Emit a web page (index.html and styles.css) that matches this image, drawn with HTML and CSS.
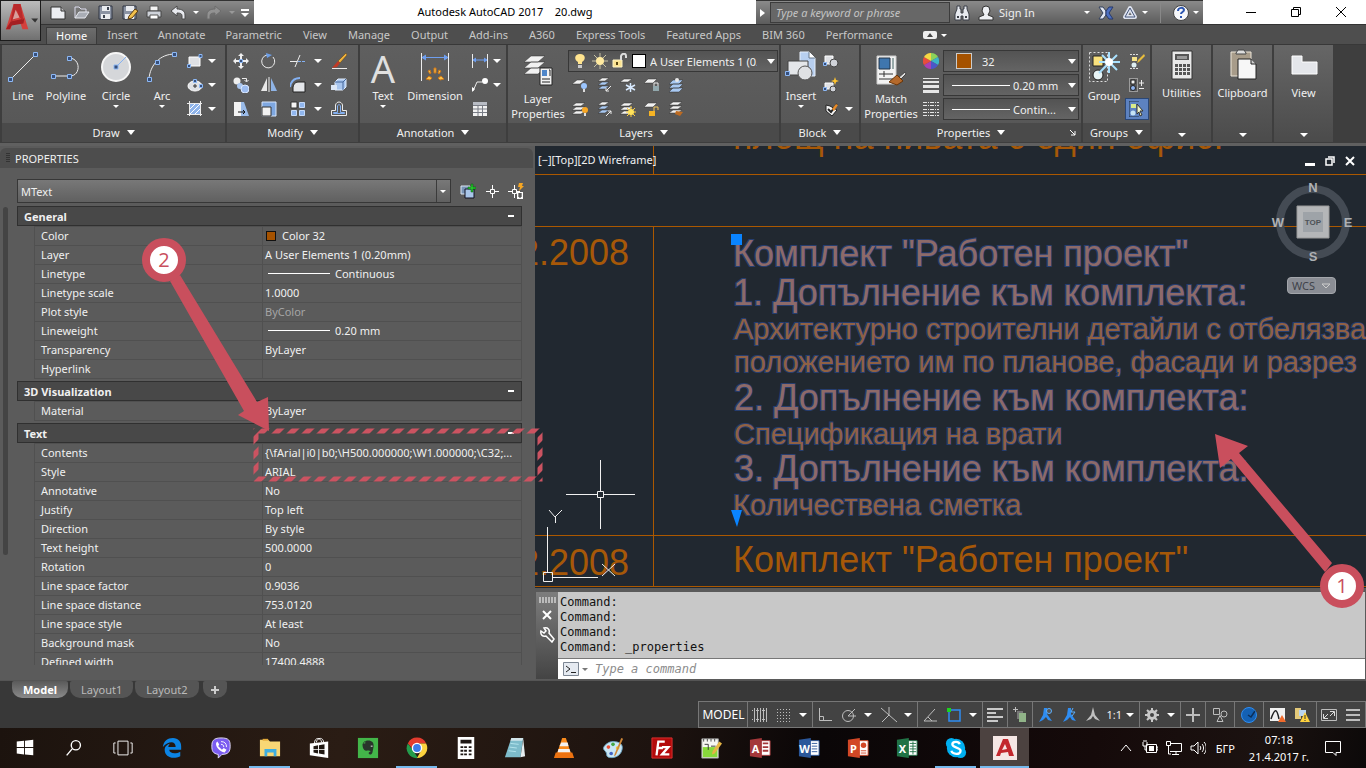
FILE: index.html
```html
<!DOCTYPE html>
<html lang="en">
<head>
    <meta charset="UTF-8">
    <meta name="viewport" content="width=device-width, initial-scale=1.0">
    <title>Autodesk AutoCAD 2017 - 20.dwg</title>
    <link rel="stylesheet" href="styles.css">
</head>
<body>
    <!-- Title bar -->
    <header class="titlebar">
        <div class="quick-access">
            <button class="ic" aria-label="New"><svg viewBox="0 0 16 16"><path d="M1 2h10l4 4v8H1z" fill="#eceef2" stroke="#333"/><path d="M11 2v4h4" fill="#bbb" stroke="#333"/></svg></button>
            <button class="ic" aria-label="Open"><svg viewBox="0 0 16 16"><path d="M1 13V2h4l2 2h5v3" fill="#777" stroke="#dde"/><path d="M1 13l4-6h10l-4 6z" fill="#a9adb5" stroke="#e6e8ee"/></svg></button>
            <button class="ic" aria-label="Save"><svg viewBox="0 0 16 16"><path d="M1 1h13v13H1z" fill="#8b93a3" stroke="#2f3542"/><path d="M4 1h8v5H4z" fill="#e9ebef"/><path d="M3 9h9v5H3z" fill="#e9ebef"/><path d="M9 2h2v3H9zM5 10h2v3H5z" fill="#3c4350"/></svg></button>
            <button class="ic" aria-label="Save As"><svg viewBox="0 0 16 16"><path d="M1 1h13v13H1z" fill="#8b93a3" stroke="#2f3542"/><path d="M4 1h8v5H4z" fill="#e9ebef"/><path d="M3 9h9v5H3z" fill="#e9ebef"/><path d="M7 11l6-7 3 2-6 7-4 1z" fill="#f2c14c" stroke="#5b3b10"/></svg></button>
            <button class="ic" aria-label="Plot"><svg viewBox="0 0 16 16"><path d="M4 1h8v5H4z" fill="#f4f4f4" stroke="#555"/><path d="M1 6h14v6H1z" fill="#cfd3da" stroke="#444"/><path d="M4 10h8v4H4z" fill="#fff" stroke="#555"/></svg></button>
            <button class="ic" aria-label="Undo"><svg viewBox="0 0 16 16"><path d="M1 6l6-5v3c5 0 8 2 8 6v4h-3v-3c0-2-1-3-5-3v3z" fill="#e8eaef" stroke="#4a4a4a"/></svg></button>
            <i class="caret caret-sm"></i>
            <button class="ic" aria-label="Redo"><svg viewBox="0 0 16 16"><path d="M15 6L9 1v3C4 4 1 6 1 10v4h3v-3c0-2 1-3 5-3v3z" fill="#929292" stroke="#6d6d6d"/></svg></button>
            <i class="caret caret-sm dim"></i>
            <button class="ic narrow" aria-label="Customize"><svg viewBox="0 0 10 10"><path d="M1 1h8v2H1zM1 5h8L5 9z" fill="#fff"/></svg></button>
        </div>
        <div class="doc-title">Autodesk AutoCAD 2017&nbsp;&nbsp;&nbsp; 20.dwg</div>
        <div class="infocenter">
            <i class="arrow-right"></i>
            <input class="search" type="text" placeholder="Type a keyword or phrase" aria-label="Search">
            <button class="ic" aria-label="Find"><svg viewBox="0 0 16 16"><path d="M3 1h3v3h1v4h2V4h1V1h3v3l2 5v6H9v-4H7v4H1V9l2-5z" fill="#e7eaf0" stroke="#3b3f48"/><path d="M3 12h2M11 12h2" stroke="#3b3f48" stroke-width="2"/></svg></button>
            <button class="signin"><svg class="s16" viewBox="0 0 16 16"><path d="M1 15v-3l5-2-2-4 1-4 3-1 3 1 1 4-2 4 5 2v3z" fill="#eef0f4" stroke="#333"/></svg>Sign In</button>
            <i class="caret caret-sm"></i>
            <button class="ic" aria-label="Exchange Apps"><svg viewBox="0 0 16 16"><path d="M1 2h4l3 4v4l-3 4H1l4-6z" fill="#e3e8f3" stroke="#32405e"/><path d="M15 2h-4L8 6v4l3 4h4l-4-6z" fill="#4d6fc0" stroke="#27396b"/></svg></button>
            <button class="ic" aria-label="Autodesk 360"><svg viewBox="0 0 16 16"><path d="M8 3L3 12h10z" fill="none" stroke="#dfe4f0" stroke-width="4" stroke-linejoin="round"/><path d="M8 3L3 12h10z" fill="none" stroke="#46567a"/></svg></button>
            <i class="caret caret-sm"></i>
            <span class="divider"></span>
            <button class="ic" aria-label="Help"><svg viewBox="0 0 16 16"><circle cx="8" cy="8" r="7.500" fill="#f6f7fa" stroke="#444"/><path d="M5 6c0-4 6-4 6-1 0 2-3 2-3 4" fill="none" stroke="#2c55b0" stroke-width="2"/><path d="M7 11h2v2H7z" fill="#2c55b0"/></svg></button>
            <i class="caret caret-sm"></i>
        </div>
        <div class="window-buttons">
            <button aria-label="Minimize"><svg class="s12" viewBox="0 0 12 12"><path d="M1 6.500h10" stroke="#000"/></svg></button>
            <button aria-label="Restore"><svg class="s12" viewBox="0 0 12 12"><path d="M1.500 3.500h7v7h-7zM3.500 3V1.500h7v7H9" fill="none" stroke="#000"/></svg></button>
            <button aria-label="Close"><svg class="s12" viewBox="0 0 12 12"><path d="M1 1l10 10M11 1L1 11" stroke="#000"/></svg></button>
        </div>
    </header>
    <button class="app-button" aria-label="Application menu">
        <svg viewBox="0 0 40 40"><path d="M5 29L13 3h7l8 26h-6l-2-6-9 1-1 5z" fill="#d4403c"/><path d="M5 29l5-8 14-3-1 5-12 2-2 4z" fill="#a51f22"/><path d="M13 3l-3 18 6-3V9l3 8 4 3-3-17z" fill="#b92a2b"/><path d="M15 9l-3 10 7-2z" fill="#d8a09c"/><path d="M31 18h7l-3 4z" fill="#333"/></svg>
    </button>

    <!-- Ribbon tabs -->
    <nav class="tabs">
        <a href="#" class="active">Home</a>
        <a href="#">Insert</a>
        <a href="#">Annotate</a>
        <a href="#">Parametric</a>
        <a href="#">View</a>
        <a href="#">Manage</a>
        <a href="#">Output</a>
        <a href="#">Add-ins</a>
        <a href="#">A360</a>
        <a href="#">Express Tools</a>
        <a href="#">Featured Apps</a>
        <a href="#">BIM 360</a>
        <a href="#">Performance</a>
        <button class="ribbon-min" aria-label="Minimize ribbon"><svg viewBox="0 0 24 8"><rect width="14" height="8" rx="2" fill="#eee"/><path d="M4 6h6L7 2z" fill="#444"/><path d="M18 3h6l-3 3z" fill="#fff"/></svg></button>
    </nav>

    <!-- Ribbon -->
    <section class="ribbon">
        <div class="panel draw">
            <div class="panel-body">
                <button class="big"><svg viewBox="0 0 32 32"><path class="w" d="M3 29L29 3"/><path class="node" d="M1.500 26.500h4v4h-4zM26.500 1.500h4v4h-4z"/></svg>Line</button>
                <button class="big"><svg viewBox="0 0 32 32"><path class="w" d="M3 25h17c11 0 11-18-1-18" /><path class="node" d="M1.500 23.500h4v4h-4zM17.500 23.500h4v4h-4zM17.500 5.500h4v4h-4z"/></svg>Polyline</button>
                <button class="big"><svg viewBox="0 0 32 32"><circle cx="16" cy="16" r="14" fill="#d5d7da" stroke="#f6f6f6" stroke-width="2"/><path class="b" d="M16 16L26 6"/><path class="node" d="M14 14h4v4h-4z"/></svg>Circle<i class="caret caret-sm"></i></button>
                <button class="big"><svg viewBox="0 0 32 32"><path class="w" d="M3 28C4 14 14 3 29 3"/><path class="node" d="M1.500 26.500h4v4h-4zM9.500 9.500h4v4h-4zM26.500 1.500h4v4h-4z"/></svg>Arc<i class="caret caret-sm"></i></button>
                <div class="tools with-caret">
                    <button class="ic" aria-label="Rectangle"><svg viewBox="0 0 16 16"><path d="M2 4h11v9H2z" fill="#dfe1e5" stroke="#fff"/><path class="node" d="M.5 11.500h3v3h-3zM12 1.500h3v3h-3z"/></svg></button><i class="caret"></i>
                    <button class="ic" aria-label="Ellipse"><svg viewBox="0 0 16 16"><ellipse cx="8" cy="9" rx="7" ry="5" fill="#dfe1e5" stroke="#fff"/><path d="M6 9h4M8 7v4" stroke="#333"/><path class="node" d="M6.500 2.500h3v3h-3zM12.500 7.500h3v3h-3z"/></svg></button><i class="caret"></i>
                    <button class="ic" aria-label="Hatch"><svg viewBox="0 0 16 16"><path d="M3 3h10v10H3z" fill="#8fb4ea"/><path d="M3 8l5-5M3 13L13 3M8 13l5-5" stroke="#fff"/><path class="w" d="M0 2.500h15M2.500 0v15"/><path class="w" d="M0 13.500h15M13.500 0v15"/></svg></button><i class="caret"></i>
                </div>
            </div>
            <button class="panel-title">Draw<i class="caret caret-lg"></i></button>
        </div>

        <div class="panel modify">
            <div class="panel-body">
                <div class="tools modify-grid">
                    <button class="ic" aria-label="Move"><svg viewBox="0 0 16 16"><path d="M8 0l3 3H9v3H7V3H5zM8 16l3-3H9v-3H7v3H5zM0 8l3-3v2h3v2H3v2zM16 8l-3-3v2h-3v2h3v2z" fill="#f0f0f0"/><path class="node" d="M6.500 6.500h3v3h-3z"/></svg></button>
                    <button class="ic" aria-label="Rotate"><svg viewBox="0 0 16 16"><path class="w" d="M12 4a6.500 6.500 0 1 1-6-2"/><path d="M5 0l6 2-5 3z" fill="#6d9fe8"/></svg></button>
                    <button class="ic" aria-label="Trim"><svg viewBox="0 0 16 16"><path class="b" d="M8 8.500h8" stroke-dasharray="3 1"/><path class="w" d="M5 14L10 2M0 8.500h7"/></svg></button><i class="caret"></i>
                    <button class="ic" aria-label="Erase"><svg viewBox="0 0 16 16"><path d="M15 0l1 2-7 8-2-2z" fill="#f0b23c" stroke="#533a12" stroke-width=".5"/><path d="M7 8l2 2-3 4-5 1z" fill="#c33a25"/><path class="w" d="M1 15.500h15"/></svg></button>
                    <button class="ic" aria-label="Copy"><svg viewBox="0 0 16 16"><circle cx="4" cy="4" r="3.500" fill="#eee"/><circle cx="7" cy="9" r="3" fill="#a9c5ee"/><circle cx="12" cy="12" r="4" fill="#9cbcf0" stroke="#dce9ff"/><path class="w" d="M9 1.500h4.500v3M11.500 3l2 2 2-2"/></svg></button>
                    <button class="ic" aria-label="Mirror"><svg viewBox="0 0 16 16"><path d="M6 1v13H0z" fill="#e8e8e8"/><path d="M10 1v13h6z" fill="#8fb4e6"/><path class="w" d="M8 0v15"/></svg></button>
                    <button class="ic" aria-label="Fillet"><svg viewBox="0 0 16 16"><path d="M3 15V10c1-4 3-5 6-5h6v10z" fill="#e4e6ea" stroke="#222"/><path class="b" d="M0 10C1 4 4 1 10 1" stroke-width="2"/></svg></button><i class="caret"></i>
                    <button class="ic" aria-label="Explode"><svg viewBox="0 0 16 16"><path d="M4 5l3-3h8v8l-3 3H4z" fill="#a8c5ed" stroke="#e1ecfb"/><path d="M4 5h8v8M12 5l3-3" fill="none" stroke="#44679b"/><path d="M0 8h6v5H0z" fill="#dce7f6"/></svg></button>
                    <button class="ic" aria-label="Stretch"><svg viewBox="0 0 16 16"><path d="M1 1h7v14H1z" fill="#f3f3f3"/><path d="M8 1h3l5 14H8z" fill="#9abbe8"/><path d="M5 11h7M10 9l2 2-2 2" fill="none" stroke="#111"/></svg></button>
                    <button class="ic" aria-label="Scale"><svg viewBox="0 0 16 16"><path d="M1 1h14v14H1z" fill="#7ea7e0" stroke="#d8e6fb"/><path d="M1 6h9v9H1z" fill="#f1f1f1" stroke="#333"/></svg></button>
                    <button class="ic" aria-label="Array"><svg viewBox="0 0 16 16"><path d="M1 1h6v6H1z" fill="#f4f4f4" stroke="#333"/><path d="M9.500 1.500h5v5h-5zM9.500 9.500h5v5h-5zM1.500 9.500h5v5h-5z" fill="#90b6ee" stroke="#c5dafa"/></svg></button><i class="caret"></i>
                    <button class="ic" aria-label="Offset"><svg viewBox="0 0 16 16"><path class="w" d="M.5 14.500V9.500h4V4c1-4 6-4 7 0v5.500h4v5z"/><path class="b" d="M2.500 12.500v-1h4V5c1-2 2-2 3 0v6.500h4v1z"/></svg></button>
                </div>
            </div>
            <button class="panel-title">Modify<i class="caret caret-lg"></i></button>
        </div>

        <div class="panel annotation">
            <div class="panel-body">
                <button class="big"><span class="letter">A</span>Text<i class="caret caret-sm"></i></button>
                <button class="big"><svg viewBox="0 0 32 32"><path class="w" d="M2.500 2v28M29.500 2v28"/><path d="M4 6.500h24M7 4L3 6.500 7 9M25 4l4 2.500L25 9" fill="#6f9ff0" stroke="#6f9ff0"/><path d="M15 17h2v5h-2zM9 20l2-1 1 3-1 1zM22 20l-2-1-1 3 1 1zM7 28l3-3 3 2-2 2zM25 28l-3-3-3 2 2 2z" fill="#f9c24a" stroke="#c9751a"/></svg>Dimension</button>
                <div class="tools with-caret">
                    <button class="ic" aria-label="Linear"><svg viewBox="0 0 16 16"><path class="w" d="M.5 1v14M15.500 1v14"/><path d="M2 7h12M4 5L1 7l3 2M12 5l3 2-3 2" fill="#6f9ff0" stroke="#6f9ff0"/></svg></button><i class="caret"></i>
                    <button class="ic" aria-label="Leader"><svg viewBox="0 0 16 16"><path class="w" d="M1 14l4-9h5"/><path d="M0 15v-5l3 2z" fill="#fff"/><circle cx="13" cy="4" r="3" fill="#fff"/></svg></button><i class="caret"></i>
                    <button class="ic" aria-label="Table"><svg viewBox="0 0 16 16"><path d="M1 1h14v14H1z" fill="#f2f2f2"/><path d="M1 1h14v3H1z" fill="#b8bcc4"/><path d="M1 4.500h14M1 8h14M1 11.500h14M6 4v11M10.500 4v11" stroke="#787c85"/></svg></button>
                </div>
            </div>
            <button class="panel-title">Annotation<i class="caret caret-lg"></i></button>
        </div>

        <div class="panel layers">
            <div class="panel-body">
                <button class="big wide"><svg viewBox="0 0 32 32"><path class="sheet" d="M2 8l7-6h14l-7 6zM2 14l7-6h14l-7 6zM2 20l7-6h14l-7 6z"/><path d="M18 14h12v17H18z" fill="#f2f2f2" stroke="#222"/><path d="M20 16h5v6h-5z" fill="#4f86c9"/><path d="M27 16h1v6M20 25h8M20 28h8" stroke="#222" fill="none"/></svg>Layer<br>Properties</button>
                <div class="layer-tools">
                    <div class="combo layer-combo">
                        <span class="combo-icons">
                            <svg class="s16" viewBox="0 0 16 16"><path d="M8 1c6 0 6 6 2 8v2H6V9C2 7 2 1 8 1z" fill="#ffe48f"/><path d="M6 12h4v3H6z" fill="#c9c9c9"/></svg>
                            <svg class="s16" viewBox="0 0 16 16"><path d="M8 0v16M0 8h16M2 2l12 12M14 2L2 14" stroke="#c7c2a4"/><circle cx="8" cy="8" r="4" fill="#ffeaa0"/></svg>
                            <svg class="s16" viewBox="0 0 16 16"><path d="M1 7h9v7H1z" fill="#fbe391" stroke="#fff4c4"/><path d="M9 7V3c1-3 5-3 5 0v2" fill="none" stroke="#ddd" stroke-width="2"/><path d="M5 9v3" stroke="#554312" stroke-width="2"/></svg>
                            <span class="swatch white"></span>
                        </span>
                        <select aria-label="Layer"><option>A User Elements 1 (0.20mm)</option></select>
                    </div>
                    <div class="tools layer-grid">
                        <button class="ic" aria-label="Off"><svg viewBox="0 0 16 16"><path class="sheet" d="M0 7l5-4h8L8 7z"/><circle cx="12" cy="9" r="3" fill="#9cc6ff"/><path d="M11 12h2v3h-2z" fill="#ddd"/></svg></button>
                        <button class="ic" aria-label="Isolate"><svg viewBox="0 0 16 16"><path class="sheet" d="M2 4l4-3h7L9 4z"/><path class="sheet blue" d="M2 8l4-3h7L9 8zM2 12l4-3h7l-4 3z"/><path class="w" d="M15 9l-5 5m0-3v3h3"/></svg></button>
                        <button class="ic" aria-label="Freeze"><svg viewBox="0 0 16 16"><path class="sheet" d="M0 5l4-3h8L8 5z"/><path d="M10.500 6v9M6 8l9 5M15 8l-9 5" stroke="#d8eaff" stroke-width="1.500"/></svg></button>
                        <button class="ic" aria-label="Lock"><svg viewBox="0 0 16 16"><path class="sheet" d="M0 6l4-4h9L9 6z"/><path d="M9 9h6v5H9z" fill="#92a8ad"/><path class="w" d="M10 9V6h4v3"/></svg></button>
                        <button class="ic" aria-label="Make current"><svg viewBox="0 0 16 16"><path class="sheet blue" d="M1 7l4-4h10l-4 4zM1 11l4-4h10l-4 4zM1 15l4-4h10l-4 4z"/><circle cx="9" cy="3" r="2" fill="#e8e8e8"/></svg></button>
                        <button class="ic" aria-label="Turn all on"><svg viewBox="0 0 16 16"><path class="sheet" d="M0 5l4-3h9L9 5zM0 9l4-3h9L9 9zM0 13l4-3h9l-4 3z"/><circle cx="13" cy="9" r="3" fill="#f9a825"/><path d="M12 12h2v3h-2z" fill="#ddd"/></svg></button>
                        <button class="ic" aria-label="Unisolate"><svg viewBox="0 0 16 16"><path class="sheet" d="M2 4l4-3h7L9 4z"/><path class="sheet blue" d="M2 8l4-3h7L9 8zM2 12l4-3h7l-4 3z"/><path class="w" d="M10 15l5-5m-3 0h3v3"/></svg></button>
                        <button class="ic" aria-label="Thaw"><svg viewBox="0 0 16 16"><path class="sheet" d="M0 5l4-3h9L9 5zM0 9l4-3h9L9 9zM0 13l4-3h9l-4 3z"/><path d="M11 5v11M6 11h10M7 7l8 8M15 7l-8 8" stroke="#ffcf3d"/><circle cx="11" cy="11" r="3" fill="#ffe25a"/></svg></button>
                        <button class="ic" aria-label="Unlock"><svg viewBox="0 0 16 16"><path class="sheet" d="M0 6l4-4h9L9 6z"/><path d="M5 10h6v5H5z" fill="#f5b324"/><path d="M10 10V6h4v3" fill="none" stroke="#f5c95e"/></svg></button>
                        <button class="ic" aria-label="Match layer"><svg viewBox="0 0 16 16"><path class="sheet" d="M1 4l4-3h9l-4 3zM1 8l4-3h9l-4 3zM1 12l4-3h9l-4 3z"/><path d="M8 10l7 1-3 4-5-2z" fill="#bd6b22"/></svg></button>
                    </div>
                </div>
            </div>
            <button class="panel-title">Layers<i class="caret caret-lg"></i></button>
        </div>

        <div class="panel block">
            <div class="panel-body">
                <button class="big"><svg viewBox="0 0 32 32"><path d="M15 1h9l6 6v18H15z" fill="#b7cff0" stroke="#e6effb"/><path d="M24 1v6h6" fill="#fff" stroke="#678"/><path d="M3 10h20v14H3z" fill="#e4e6e9" stroke="#444"/><circle cx="20" cy="22" r="7" fill="#dfe1e4" stroke="#555"/><path class="node" d="M.5 20.500h4v4h-4z"/></svg>Insert<i class="caret caret-sm"></i></button>
                <div class="tools with-caret tight">
                    <button class="ic" aria-label="Create block"><svg viewBox="0 0 16 16"><path d="M2 3h8v8H2z" fill="#dfe1e5" stroke="#fff"/><circle cx="11" cy="10" r="4" fill="#cfd2d8" stroke="#444"/><path class="node" d="M.5 9.500h3v3h-3z"/></svg></button><i></i>
                    <button class="ic" aria-label="Edit block"><svg viewBox="0 0 16 16"><path d="M2 6h8v6H2z" fill="#dfe1e5" stroke="#fff"/><circle cx="10" cy="12" r="3" fill="#cfd2d8" stroke="#444"/><path d="M12 0l1 3 3 1-3 1-1 3-1-3-3-1 3-1z" fill="#ffc42e"/><path class="node" d="M.5 10.500h3v3h-3z"/></svg></button><i></i>
                    <button class="ic" aria-label="Edit attributes"><svg viewBox="0 0 16 16"><path d="M3 4l4 1 7 4-5 6-6-5z" fill="#f2f2f2" stroke="#222"/><path d="M5 8l3 3 6-8" fill="none" stroke="#222" stroke-width="2"/><path d="M9 8l4-5 2 1-4 6z" fill="#e98b28"/></svg></button><i class="caret"></i>
                </div>
            </div>
            <button class="panel-title">Block<i class="caret caret-lg"></i></button>
        </div>

        <div class="panel props">
            <div class="panel-body">
                <button class="big wide"><svg viewBox="0 0 32 32"><path d="M2 2h19v28H2z" fill="#f3f3f3" stroke="#ccc"/><path d="M4 4h11v11H4z" fill="#3f76ae" stroke="#234"/><path d="M18 4v11" stroke="#9aa" stroke-width="2"/><path d="M4 20h14M4 25h14M9 17v6" stroke="#333"/><path d="M30 18l1 2-6 6-2-2z" fill="#ddd" stroke="#444"/><path d="M22 21l6 6-6 4-8-3z" fill="#b4692b" stroke="#693508"/></svg>Match<br>Properties</button>
                <div class="prop-rows">
                    <svg class="s16" viewBox="0 0 16 16"><path d="M8 8V0a8 8 0 0 1 7 4z" fill="#8bd35a"/><path d="M8 8l7-4a8 8 0 0 1 0 8z" fill="#3db4c9"/><path d="M8 8l7 4a8 8 0 0 1-7 4z" fill="#4a58c8"/><path d="M8 8v8a8 8 0 0 1-7-4z" fill="#a940b4"/><path d="M8 8l-7 4a8 8 0 0 1 0-8z" fill="#e84c3d"/><path d="M8 8L1 4a8 8 0 0 1 7-4z" fill="#f6d743"/></svg>
                    <div class="combo color-combo"><span class="swatch orange"></span><select aria-label="Object color"><option>32</option></select></div>
                    <svg class="s16" viewBox="0 0 16 16"><path d="M0 1h16v1H0zM0 4h16v2H0zM0 8h16v3H0zM0 13h16v3H0z" fill="#e6e6e6"/></svg>
                    <div class="combo line-combo"><span class="sample"></span><select aria-label="Lineweight"><option>0.20 mm</option></select></div>
                    <svg class="s16" viewBox="0 0 16 16"><path d="M0 1.500h16M0 4.500h16M0 8.500h16M0 11.500h16M0 14.500h16" stroke="#e6e6e6" stroke-dasharray="4 1 1 1"/></svg>
                    <div class="combo line-combo"><span class="sample"></span><select aria-label="Linetype"><option>Contin...</option></select></div>
                </div>
            </div>
            <button class="panel-title">Properties<i class="caret caret-lg"></i><svg class="launcher" viewBox="0 0 8 8"><path d="M1 1l5 5M6 2v4H2" fill="none" stroke="#fff"/></svg></button>
        </div>

        <div class="panel groups">
            <div class="panel-body">
                <button class="big"><svg viewBox="0 0 32 32"><path d="M1.500 1.500h18v29h-18z" fill="none" stroke="#ddd" stroke-dasharray="2 2"/><path d="M5 5h10v10H5z" fill="#f9e17e" stroke="#222"/><circle cx="10" cy="24" r="5" fill="#e8f4f6" stroke="#222"/><path d="M21 1v21M11 11h21M14 4l15 15M29 4L11 22" stroke="#a9e1ff" stroke-width="2"/><circle cx="21" cy="11" r="4" fill="#fff"/></svg>Group</button>
                <div class="tools group-tools">
                    <button class="ic" aria-label="Ungroup"><svg viewBox="0 0 16 16"><path d="M1 1.500h9M1 15.500h9" stroke="#ddd" stroke-dasharray="2 1"/><path d="M3 4h5v4H3z" fill="#f6e38a"/><circle cx="5" cy="12" r="2.500" fill="#dfeff2"/><path d="M15 1l1 2-6 6-2 1 1-3z" fill="#e9bd3c"/></svg></button>
                    <button class="ic" aria-label="Group edit"><svg viewBox="0 0 16 16"><path d="M.5 1.500h8v13h-8z" fill="none" stroke="#ddd" stroke-dasharray="1 1"/><path d="M2 3h4v4H2z" fill="#f1f1f1" stroke="#222"/><circle cx="4" cy="11" r="2.500" fill="#8fb3ef" stroke="#222"/><path class="w" d="M10 6h5M12.500 3v6M10 11.500h5"/></svg></button>
                    <button class="ic on" aria-label="Group selection"><svg viewBox="0 0 16 16"><path d="M.5.5h9M.5 15.500h9M.5.5v15" stroke="#234" stroke-dasharray="1 1"/><path d="M2 3h5v4H2z" fill="#d9eb8a"/><circle cx="4" cy="12" r="2.500" fill="#c5e3f5"/><path d="M8 3l6 7H11l2 4-2 1-1-4-2 2z" fill="#eef3c9" stroke="#333"/></svg></button>
                </div>
            </div>
            <button class="panel-title">Groups<i class="caret caret-lg"></i></button>
        </div>

        <button class="folded"><svg viewBox="0 0 32 32"><path d="M6 2h20v28H6z" fill="#e8e8e8" stroke="#333"/><path d="M9 5h14v6H9z" fill="#555"/><path d="M11 7h10v3H11z" fill="#999"/><path d="M9 15h3v3H9zM13 15h3v3h-3zM17 15h3v3h-3zM21 15h3v3h-3zM9 19h3v3H9zM13 19h3v3h-3zM17 19h3v3h-3zM21 19h3v3h-3zM9 23h3v3H9zM13 23h3v3h-3zM17 23h3v3h-3zM21 23h3v3h-3z" fill="#555"/></svg>Utilities<i class="caret"></i></button>
        <button class="folded"><svg viewBox="0 0 32 32"><path d="M4 3h20v24H4z" fill="#a89c8a" stroke="#ece5d8"/><path d="M9 4l2-3h6l2 3v1H9z" fill="#ddd" stroke="#444"/><path d="M11 10h13l5 5v15H11z" fill="#f7f7f7" stroke="#222"/><path d="M24 10v5h5" fill="#ccc" stroke="#222"/></svg>Clipboard<i class="caret"></i></button>
        <button class="folded"><svg viewBox="0 0 32 32"><path d="M4 7h10v6h15v12H4z" fill="#e4e6ea" stroke="#fff"/></svg>View<i class="caret"></i></button>
    </section>

    <main class="workspace">
        <!-- Properties palette -->
        <aside class="palette">
            <div class="palette-title"><span class="grip"></span>PROPERTIES</div>
            <div class="palette-body">
                <div class="object-row">
                    <div class="combo object-combo"><select aria-label="Object type"><option>MText</option></select></div>
                    <button class="ic" aria-label="Toggle PICKADD"><svg viewBox="0 0 16 16"><path d="M1 3h9v8H1z" fill="#7893b5" stroke="#dbe7f5"/><path d="M5 6h9v9H5z" fill="#a9c6ea" stroke="#112"/><path d="M11 1h2v3h3v2h-3v3h-2V6H8V4h3z" fill="#25c12c" stroke="#075a0c" stroke-width=".5"/></svg></button>
                    <button class="ic" aria-label="Select objects"><svg viewBox="0 0 16 16"><path d="M8.500 2v4M8.500 11v4M2 8.500h4M11 8.500h4M6.500 6.500h4v4h-4z" fill="none" stroke="#fff"/></svg></button>
                    <button class="ic" aria-label="Quick select"><svg viewBox="0 0 16 16"><path d="M6.500 2v4M6.500 11v4M0 8.500h4M9 8.500h3M4.500 6.500h4v4h-4z" fill="none" stroke="#fff"/><path d="M11 0h4l-1 3h2l-5 5 1-4h-2z" fill="#f5a623"/><path d="M9 9h6v7H9z" fill="#fff"/><path d="M10 11h4M10 13h4M12 10v5" stroke="#222"/></svg></button>
                </div>
                <div class="prop-scroll">
                    <h2 class="section">General<button aria-label="Collapse General"></button></h2>
                    <table class="proptable">
                        <tr><th>Color</th><td><span class="color-box"></span>Color 32</td></tr>
                        <tr><th>Layer</th><td>A User Elements 1 (0.20mm)</td></tr>
                        <tr><th>Linetype</th><td><span class="line-sample"></span>Continuous</td></tr>
                        <tr><th>Linetype scale</th><td>1.0000</td></tr>
                        <tr><th>Plot style</th><td class="muted">ByColor</td></tr>
                        <tr><th>Lineweight</th><td><span class="line-sample"></span>0.20 mm</td></tr>
                        <tr><th>Transparency</th><td>ByLayer</td></tr>
                        <tr><th>Hyperlink</th><td></td></tr>
                    </table>
                    <h2 class="section">3D Visualization<button aria-label="Collapse 3D Visualization"></button></h2>
                    <table class="proptable">
                        <tr><th>Material</th><td>ByLayer</td></tr>
                    </table>
                    <h2 class="section">Text<button aria-label="Collapse Text"></button></h2>
                    <table class="proptable">
                        <tr><th>Contents</th><td>{\fArial|i0|b0;\H500.000000;\W1.000000;\C32;...</td></tr>
                        <tr><th>Style</th><td>ARIAL</td></tr>
                        <tr><th>Annotative</th><td>No</td></tr>
                        <tr><th>Justify</th><td>Top left</td></tr>
                        <tr><th>Direction</th><td>By style</td></tr>
                        <tr><th>Text height</th><td>500.0000</td></tr>
                        <tr><th>Rotation</th><td>0</td></tr>
                        <tr><th>Line space factor</th><td>0.9036</td></tr>
                        <tr><th>Line space distance</th><td>753.0120</td></tr>
                        <tr><th>Line space style</th><td>At least</td></tr>
                        <tr><th>Background mask</th><td>No</td></tr>
                        <tr><th>Defined width</th><td>17400.4888</td></tr>
                    </table>
                </div>
            </div>
        </aside>

        <div class="editor">
            <!-- Model space -->
            <div class="canvas">
                <svg class="drawing">
                    <g class="frame">
                        <path d="M118.500 0v28M118.500 80v361"/>
                        <line x1="0" y1="28.500" x2="100%" y2="28.500"/>
                        <line x1="0" y1="80.500" x2="100%" y2="80.500"/>
                        <line x1="0" y1="389.500" x2="100%" y2="389.500"/>
                        <line x1="0" y1="440.500" x2="100%" y2="440.500"/>
                    </g>
                    <g class="note">
                        <text x="198" y="3">площ на нивата с един офис.</text>
                        <text x="94" y="119" text-anchor="end">12.2008</text>
                        <text x="94" y="429" text-anchor="end">12.2008</text>
                        <text x="198" y="426">Комплект "Работен проект"</text>
                    </g>
                    <g class="note picked">
                        <text x="198" y="120">Комплект "Работен проект"</text>
                        <text x="198" y="159">1. Допълнение към комплекта:</text>
                        <text x="199" y="193" class="small">Архитектурно строителни детайли с отбелязва</text>
                        <text x="199" y="226" class="small">положението им по планове, фасади и разрез</text>
                        <text x="199" y="264">2. Допълнение към комплекта:</text>
                        <text x="199" y="298" class="small">Спецификация на врати</text>
                        <text x="199" y="335">3. Допълнение към комплекта:</text>
                        <text x="198" y="369" class="small">Количествена сметка</text>
                    </g>
                    <path d="M196 88h11v11h-11zM196 364h11l-5 17z" fill="#0a84ff"/>
                    <path d="M31 348.500h31M69 348.500h31M65.500 314v31M65.500 352v31M62.500 345.500h6v6h-6z" class="cursor"/>
                    <path d="M12.500 381v45M17 431.500h46M8.500 426.500h9v9h-9zM14 364l6 7 7-7M20.500 371v6M67 418l13 12M80 418l-13 12" class="cursor"/>
                </svg>
                <div class="viewport-label">[−][Top][2D Wireframe]</div>
                <div class="doc-buttons">
                    <button aria-label="Minimize drawing"><svg class="s12" viewBox="0 0 12 12"><path d="M1 8h10v3H1z" fill="#fff"/></svg></button>
                    <button aria-label="Restore drawing"><svg class="s12" viewBox="0 0 12 12"><path d="M2 4h6v6H2zM4 2h6v6" fill="none" stroke="#fff" stroke-width="1.500"/></svg></button>
                    <button aria-label="Close drawing"><svg class="s12" viewBox="0 0 12 12"><path d="M2 2l8 8M10 2l-8 8" stroke="#fff" stroke-width="2"/></svg></button>
                </div>
                <div class="viewcube">
                    <svg viewBox="0 0 84 84"><circle cx="42" cy="42" r="33" fill="none" stroke="#444b54" stroke-width="8"/><path d="M26 26h32v32H26z" fill="#b4b6b8" stroke="#999"/><path d="M32 32h20v20H32z" fill="#9ea3a8"/></svg>
                    <span class="north">N</span><span class="east">E</span><span class="south">S</span><span class="west">W</span><span class="top">TOP</span>
                </div>
                <button class="wcs">WCS<svg viewBox="0 0 10 6"><path d="M1 1h8L5 5z" fill="none" stroke="#ccc"/></svg></button>
            </div>

            <!-- Command line -->
            <div class="command">
                <div class="command-side">
                    <span class="dots"></span>
                    <svg class="s12" viewBox="0 0 12 12"><path d="M2 2l8 8M10 2l-8 8" stroke="#fff" stroke-width="2"/></svg>
                    <svg class="s16" viewBox="0 0 16 16"><path d="M2 4l3 2 2-2-2-3c4-1 6 2 5 5l5 6-2 3-6-6C4 10 1 8 2 4z" fill="none" stroke="#fff" stroke-width="1.500"/></svg>
                </div>
                <div class="command-main">
                    <div class="history">
                        <div>Command:</div>
                        <div>Command:</div>
                        <div>Command:</div>
                        <div>Command: _properties</div>
                    </div>
                    <div class="prompt">
                        <svg class="s16" viewBox="0 0 16 16"><path d="M.5 1.500h15v13H.5z" fill="#e5eaf1" stroke="#7d8794"/><path d="M3 5l4 3-4 3M8 11.500h5" fill="none" stroke="#222"/></svg>
                        <i class="caret caret-sm dark"></i>
                        <input type="text" placeholder="Type a command" aria-label="Command">
                    </div>
                </div>
            </div>
        </div>
    </main>

    <!-- Layout tabs and status bar -->
    <footer class="bottom">
        <div class="layouts">
            <button class="active">Model</button>
            <button>Layout1</button>
            <button>Layout2</button>
            <button class="add" aria-label="New layout"><svg viewBox="0 0 10 10"><path d="M5 1v8M1 5h8" stroke="#ccc" stroke-width="2"/></svg></button>
        </div>
        <div class="status">
            <div class="cell model"><button>MODEL</button></div>
            <div class="cell">
                <button class="ic" aria-label="Grid"><svg viewBox="0 0 16 16"><path class="g" d="M2.500 1v14M5.500 1v14M8.500 1v14M11.500 1v14M14.500 1v14"/><path class="g" d="M0 3.500h16M0 12.500h16" stroke-dasharray="1 1"/></svg></button>
                <button class="ic" aria-label="Snap"><svg viewBox="0 0 16 16"><path class="g" d="M1 2.500h14M1 5.500h14M1 8.500h14M1 11.500h14M1 14.500h14" stroke-dasharray="1 2"/></svg></button>
                <i class="caret"></i>
            </div>
            <div class="cell">
                <button class="ic" aria-label="Ortho"><svg viewBox="0 0 16 16"><path class="g" d="M2.500 1v12.500H15M6.500 13V9.500H2"/></svg></button>
                <button class="ic" aria-label="Polar"><svg viewBox="0 0 16 16"><circle class="g" cx="7" cy="9" r="5.500"/><path class="g" d="M15 9H7l7-7"/></svg></button>
                <i class="caret"></i>
                <button class="ic" aria-label="Isodraft"><svg viewBox="0 0 16 16"><path class="g" d="M0 1l16 14M8 0v8L1 15"/></svg></button>
                <i class="caret"></i>
            </div>
            <div class="cell">
                <button class="ic" aria-label="Object tracking"><svg viewBox="0 0 16 16"><path class="g" d="M13 2L2 14h13"/><path class="g" d="M6 10l4 4"/></svg></button>
                <button class="ic" aria-label="Object snap"><svg viewBox="0 0 16 16"><path d="M3 3h11v11H3z" fill="none" stroke="#2f8df2" stroke-width="1.500"/><path d="M1 1h4v4H1z" fill="#1dd31d"/></svg></button>
                <i class="caret"></i>
            </div>
            <div class="cell"><button class="ic" aria-label="Lineweight"><svg viewBox="0 0 16 16"><path d="M0 1h16v2H0zM0 5h9v2H0zM0 9h16v2H0zM0 13h11v2H0z" fill="#c9c9c9"/></svg></button></div>
            <div class="cell"><button class="ic" aria-label="Selection cycling"><svg viewBox="0 0 16 16"><path class="g" d="M3.500 0v5M1 2.500h5"/><path d="M5 4h6v8H5z" fill="#777"/><path d="M7 6h7v9H7z" fill="#91b489"/></svg></button></div>
            <div class="cell">
                <button class="ic" aria-label="Annotation visibility"><svg viewBox="0 0 16 16"><path d="M7 1h3v6l5 7-4-1-2-3-3 3-4 2 4-7z" fill="#2f8df2"/><circle cx="12" cy="4" r="2.500" fill="#555" stroke="#5bb0ff"/></svg></button>
                <button class="ic" aria-label="AutoScale"><svg viewBox="0 0 16 16"><path d="M7 1h3v6l5 7-4-1-2-3-3 3-4 2 4-7z" fill="#2f8df2"/><path d="M12 1l-2 4h4l-3 4" fill="none" stroke="#5bb0ff"/></svg></button>
                <button class="ic" aria-label="Annotation scale"><svg viewBox="0 0 16 16"><path d="M8 0l2 8 5 6-5-2-2-3-2 3-5 2 5-6z" fill="#bfbfbf"/></svg></button>
                <button class="scale">1:1</button>
                <i class="caret"></i>
            </div>
            <div class="cell">
                <button class="ic" aria-label="Workspace"><svg viewBox="0 0 16 16"><circle cx="8" cy="8" r="3.500" fill="none" stroke="#c8c8c8" stroke-width="3"/><path d="M8 1v3M8 12v3M1 8h3M12 8h3M3 3l2 2M11 11l2 2M13 3l-2 2M3 13l2-2" stroke="#c8c8c8" stroke-width="2"/></svg></button>
                <i class="caret"></i>
            </div>
            <div class="cell"><button class="ic" aria-label="Annotation monitor"><svg viewBox="0 0 16 16"><path class="g" d="M8 1v14M1 8h14" stroke-width="2"/></svg></button></div>
            <div class="cell roomy"><button class="ic" aria-label="Isolate objects"><svg viewBox="0 0 16 16"><path class="g" d="M1.500 1.500h6v6h-6zM5 14.500l3-6 3 6z"/><circle class="g" cx="12" cy="7" r="3"/></svg></button></div>
            <div class="cell roomy"><button class="ic" aria-label="Graphics performance"><svg viewBox="0 0 16 16"><circle cx="8" cy="8" r="7.500" fill="#1461b4" stroke="#318ef0"/><path d="M7 8l3 2 4-6" fill="none" stroke="#0c2e58" stroke-width="1.500"/></svg></button></div>
            <div class="cell roomy">
                <button class="ic" aria-label="Trusted DWG"><svg viewBox="0 0 16 16"><path d="M0 1h15v13H0z" fill="#f1f1f1"/><path d="M1 12C5 0 7 2 9 12" fill="none" stroke="#222" stroke-width="1.500"/><path d="M12 8l4 7H8z" fill="#ef6a2c"/></svg></button>
                <button class="ic" aria-label="Units"><svg viewBox="0 0 16 16"><path d="M1 1h6v11H1z" fill="#e2c879"/><path d="M5 3h7v6H5z" fill="#b9d3ef"/><path d="M11 5l5 10H6z" fill="#ffd23e"/><path d="M11 8v4M11 13v1" stroke="#333"/></svg></button>
            </div>
            <div class="cell last">
                <button class="ic" aria-label="Clean screen"><svg viewBox="0 0 16 16"><path class="g" d="M.5 2.500h15v11H.5z"/><path d="M9 4.500h4.500V9M13 5l-4 4M2.500 7v4.500H7M3 11l4-4" fill="none" stroke="#ddd"/></svg></button>
                <button class="ic" aria-label="Customization"><svg viewBox="0 0 16 16"><path d="M1 2h14v2H1zM1 7h14v2H1zM1 12h14v2H1z" fill="#bdbdbd"/></svg></button>
            </div>
        </div>
    </footer>

    <!-- Windows taskbar -->
    <div class="taskbar">
        <button class="task" aria-label="Start"><svg viewBox="0 0 24 24"><path d="M3 5l8-1v7H3zM12 4l9-1v8h-9zM3 12h8v7l-8-1zM12 12h9v8l-9-1z" fill="#fff"/></svg></button>
        <button class="task" aria-label="Search"><svg viewBox="0 0 24 24"><circle cx="14" cy="9" r="5" fill="none" stroke="#fff" stroke-width="1.500"/><path d="M10 13l-6 7" stroke="#fff" stroke-width="1.500"/></svg></button>
        <button class="task" aria-label="Task View"><svg viewBox="0 0 24 24"><path d="M6.500 4.500h11v15h-11zM4 6.500H2v11h2M20 6.500h2v11h-2" fill="none" stroke="#fff"/></svg></button>
        <button class="task" aria-label="Edge"><svg viewBox="0 0 24 24"><path d="M2 11C3 4 7 1 13 1c6 0 9 4 9 9v4H9c0 4 7 5 12 2v5C13 25 4 22 4 14c0-4 3-6 6-7-1 1-2 2-2 4h8c0-8-9-6-14 0z" fill="#0c84e4"/></svg></button>
        <button class="task" aria-label="Viber"><svg viewBox="0 0 24 24"><path d="M12 1c9 0 10 3 10 9s-2 9-9 9l-4 4v-4C3 18 2 15 2 10s1-9 10-9z" fill="#7b5cf0" stroke="#e9e4ff"/><path d="M7 6c-2 3 3 10 9 11l2-3-3-2-2 2-4-4 1-2-2-3z" fill="#fff"/><path d="M12 5c4 0 6 2 6 6M12 8c2 0 3 1 3 3" fill="none" stroke="#fff"/></svg></button>
        <button class="task running" aria-label="File Explorer"><svg viewBox="0 0 24 24"><path d="M1 3h9l2 2h11v16H1z" fill="#f8d775"/><path d="M4 2h6v2H4z" fill="#e2a93a"/><path d="M6 13h13v8h-3v-4H9v4H6z" fill="#3eaee0"/></svg></button>
        <button class="task" aria-label="Store"><svg viewBox="0 0 24 24"><path d="M2 7l20-2v18L2 20z" fill="#fff"/><path d="M7 7c0-7 7-7 8-1M9 6c1-6 8-6 8 0" fill="none" stroke="#fff"/><path d="M6 10l5-1v4H6zM12 9l6-1v5h-6zM6 14h5v4l-5-1zM12 14h6v5l-6-1z" fill="#201812"/></svg></button>
        <button class="task" aria-label="Evernote"><svg viewBox="0 0 24 24"><path d="M1 1h22v22H1z" fill="#43b649"/><path d="M6 8l4-4c5-1 9 1 8 7-1 5-1 8-3 8-3 0-3-3 0-3-2-2-3-1-5-1-3 0-4-4-4-7zM6 7h3V4z" fill="#29352b"/><path d="M15 10h2" stroke="#fff"/></svg></button>
        <button class="task running" aria-label="Chrome"><svg viewBox="0 0 24 24"><path d="M2 7a11 11 0 0 1 20 0H12L8 14z" fill="#e33b2e"/><path d="M2 7l6 8 5 8A11 11 0 0 1 2 7z" fill="#249b4c"/><path d="M22 7a11 11 0 0 1-10 16l5-9-2-7z" fill="#fcd23e"/><circle cx="12" cy="12" r="5" fill="#3c7bea" stroke="#fff" stroke-width="1.500"/></svg></button>
        <button class="task" aria-label="Calculator"><svg viewBox="0 0 24 24"><path d="M3 0h18v24H3z" fill="#fff"/><path d="M6 3h12v4H6zM6 10h3v2H6zM10 10h3v2h-3zM15 10h3v2h-3zM6 14h3v2H6zM10 14h3v2h-3zM15 14h3v2h-3zM6 18h3v2H6zM10 18h3v2h-3zM15 18h3v2h-3z" fill="#1d1613"/></svg></button>
        <button class="task" aria-label="Notepad"><svg viewBox="0 0 24 24"><path d="M8 1h13l-3 21H1z" fill="#7ebccb"/><path d="M8 1h13l-1 3H7z" fill="#d2e5ea"/><path d="M18 22l5-1L21 2z" fill="#e7eef0"/><path d="M7 7l9 1M6 11l8 1M5 15l8 1" stroke="#b7e6ef"/></svg></button>
        <button class="task" aria-label="VLC"><svg viewBox="0 0 24 24"><path d="M10 1h4l6 18H4z" fill="#fa8b1c"/><path d="M9 6h7l1 4H7zM6 13h12l1 4H5z" fill="#f2f2f2"/><path d="M3 17h18l2 6H1z" fill="#ed7210"/></svg></button>
        <button class="task" aria-label="Paint"><svg viewBox="0 0 24 24"><path d="M12 5c7 0 11 3 10 8-1 7-8 11-15 9-3-1-1-4-3-6s-3-3-2-5 5-6 10-6z" fill="#c9e6f5" stroke="#6ba5c4"/><circle cx="7" cy="11" r="2" fill="#e94f36"/><circle cx="12" cy="8" r="2" fill="#42a743"/><circle cx="17" cy="12" r="2" fill="#f5c835"/><circle cx="10" cy="18" r="2" fill="#4263c4"/><path d="M21 1l2 1-8 18-2 1 1-3z" fill="#ce8739"/></svg></button>
        <button class="task" aria-label="FileZilla"><svg viewBox="0 0 24 24"><path d="M1 1h22v22H1z" fill="#b30b0b" stroke="#d33"/><path d="M6 20L8 5h7M7 12h6M12 11h7l-7 8h8" fill="none" stroke="#fff" stroke-width="2.500"/></svg></button>
        <button class="task" aria-label="Notepad++"><svg viewBox="0 0 24 24"><path d="M2 2h18v21H2z" fill="#f6f6f2" stroke="#999"/><path d="M3 11h16v11H3z" fill="#88d93b"/><path d="M4 2v3M8 2v3M12 2v3M16 2v3" stroke="#444"/><path d="M5 8h4v6M12 10h5" stroke="#333" fill="none"/><path d="M21 5l3 2-8 11-3 1 1-4z" fill="#e6b545"/></svg></button>
        <button class="task office" aria-label="Access"><svg viewBox="0 0 24 24"><path d="M13 4h10v16H13z" fill="#fff" stroke="#a4373a"/><path d="M15 7h6M15 11h6M15 15h6" stroke="#a4373a" stroke-width="2"/><path d="M1 3l13-2v22L1 21z" fill="#a4373a"/></svg><b>A</b></button>
        <button class="task office" aria-label="Word"><svg viewBox="0 0 24 24"><path d="M13 4h10v16H13z" fill="#fff" stroke="#2b579a"/><path d="M15 7h6M15 10h6M15 13h6M15 16h6" stroke="#2b579a"/><path d="M1 3l13-2v22L1 21z" fill="#2b579a"/></svg><b>W</b></button>
        <button class="task office" aria-label="PowerPoint"><svg viewBox="0 0 24 24"><path d="M13 4h10v16H13z" fill="#fff" stroke="#d24726"/><circle cx="18" cy="9" r="3" fill="#d24726"/><path d="M15 15h6M15 17.500h6" stroke="#d24726"/><path d="M1 3l13-2v22L1 21z" fill="#d24726"/></svg><b>P</b></button>
        <button class="task office" aria-label="Excel"><svg viewBox="0 0 24 24"><path d="M13 4h10v16H13z" fill="#fff" stroke="#217346"/><path d="M15 7h7M15 10h7M15 13h7M15 16h7M18.500 5v14" stroke="#217346"/><path d="M1 3l13-2v22L1 21z" fill="#217346"/></svg><b>X</b></button>
        <button class="task running" aria-label="Skype"><svg viewBox="0 0 24 24"><circle cx="12" cy="12" r="10" fill="#00aff0"/><circle cx="7" cy="7" r="6" fill="#00aff0"/><circle cx="17" cy="17" r="6" fill="#00aff0"/><path d="M16 8c-1-4-8-3-8 0 0 4 9 3 9 7 0 5-9 4-10 0" fill="none" stroke="#fff" stroke-width="2.500"/></svg></button>
        <button class="task current" aria-label="AutoCAD"><svg viewBox="0 0 24 24"><path d="M0 0h24v24H0z" fill="#f5e6e4"/><path d="M3 20L10 3h5l6 17h-5l-1-4-7 1-1 3z" fill="#c2272d"/><path d="M12 8l-3 6 5-1z" fill="#f5e6e4"/></svg></button>
        <div class="tray">
            <svg class="s16" viewBox="0 0 16 16"><path d="M3 11l5-6 5 6" class="tw"/></svg>
            <svg class="s16" viewBox="0 0 16 16"><path d="M4.500 4.500h10v8h-10zM15 7h1v3h-1M1 2v4h4V2M3 6v4h2M2 0v2M4 0v2" class="tw"/><path d="M7 6h5v5H7z" fill="#fff"/></svg>
            <svg class="s16" viewBox="0 0 16 16"><path d="M5 3.500h10.500v8H4M10 12v3M6 14.500h7M.5 1.500h4v4h-4zM2.500 6v8H5" class="tw"/></svg>
            <svg class="s16" viewBox="0 0 16 16"><path d="M1 6h3l4-4v12L4 10H1zM10 6c1 1 1 3 0 4M12 4c2 2 2 6 0 8M14 2c3 3 3 9 0 12" class="tw"/></svg>
            <span class="lang">БГР</span>
            <div class="clock"><span>07:18</span><span>21.4.2017 г.</span></div>
            <svg class="s16" viewBox="0 0 16 16"><path d="M.5 1.500h15v11H11v3l-3-3H.5z" class="tw"/></svg>
        </div>
    </div>

    <!-- Numbered callouts -->
    <svg class="callouts">
        <defs>
            <pattern id="stripes" width="15" height="15" patternUnits="userSpaceOnUse" patternTransform="skewX(-45)">
                <rect width="8" height="15" fill="#cb5361"/>
            </pattern>
        </defs>
        <path d="M256 431h284v48H256z" fill="none" stroke="url(#stripes)" stroke-width="5"/>
        <path d="M170 281l10-6 77 127 11-5 1 34-31-16 6-4z" fill="#c94f5d"/>
        <circle cx="164" cy="260" r="18" fill="#fff" stroke="#c94f5d" stroke-width="8"/>
        <text x="164" y="267" text-anchor="middle">2</text>
        <path d="M1215 434l33 12-9 7 93 110-7 9-94-113-11 9z" fill="#c94f5d"/>
        <circle cx="1342" cy="586" r="18" fill="#fff" stroke="#c94f5d" stroke-width="8"/>
        <text x="1342" y="593" text-anchor="middle">1</text>
    </svg>
</body>
</html>
```
FILE: styles.css
```css
* {
    box-sizing: border-box;
}

body {
    margin: 0;
    height: 100vh;
    display: flex;
    flex-direction: column;
    position: relative;
    overflow: hidden;
    background: #383838;
    color: #f0f0f0;
    font-family: "Noto Sans", "Open Sans", sans-serif;
    font-size: 11px;
    line-height: 15px;
}

button, input, select {
    font: inherit;
    color: inherit;
    background: none;
    border: 0;
    margin: 0;
    padding: 0;
}

a {
    color: inherit;
    text-decoration: none;
}

svg {
    display: block;
    flex: none;
}

/* Shared icon styles */
.ic {
    width: 24px;
    height: 24px;
    flex: none;
    display: flex;
    align-items: center;
    justify-content: center;
}

.ic svg, .s16 {
    width: 16px;
    height: 16px;
}

.ic.narrow {
    width: 14px;
}

.ic.narrow svg {
    width: 10px;
    height: 10px;
}

.s12 {
    width: 12px;
    height: 12px;
}

.w { fill: none; stroke: #ececec; }
.b { fill: none; stroke: #84b1f2; }
.g { fill: none; stroke: #bdbdbd; }
.node { fill: #37507c; stroke: #8db8f5; }
.sheet { fill: #f2f2f2; stroke: #333; stroke-width: .5; }
.sheet.blue { fill: #a9c9f2; }
.tw { fill: none; stroke: #fff; }

.caret {
    width: 0;
    height: 0;
    flex: none;
    border: 4px solid transparent;
    border-top-color: #fff;
    border-bottom: 0;
}

.caret-sm {
    border-width: 3px 3px 0;
}

.caret-lg {
    border-width: 5px 4px 0;
    margin-left: 7px;
}

.caret.dim { border-top-color: #999; }
.caret.dark { border-top-color: #777; }

/* Title bar */
.titlebar {
    display: flex;
    height: 24px;
    flex: none;
    background: #fff;
    color: #000;
}

.quick-access, .infocenter {
    display: flex;
    align-items: center;
    background: linear-gradient(#8a8a8a, #5c5c5c);
    border-top: 1px solid #333;
}

.quick-access {
    width: 254px;
    padding-left: 46px;
}

.quick-access .caret {
    margin: 0 3px;
}

.doc-title {
    flex: 1;
    text-align: center;
    line-height: 24px;
}

.infocenter {
    width: 447px;
    color: #f0f0f0;
}

.arrow-right {
    border: 4px solid transparent;
    border-left: 5px solid #fff;
    border-right: 0;
    margin: 0 5px 0 4px;
}

.search {
    width: 180px;
    height: 21px;
    padding: 0 5px;
    background: #676767;
    border: 1px solid #3c3c3c;
    font-style: italic;
}

.search::placeholder {
    color: #c4c4c4;
}

.signin {
    flex: 1;
    display: flex;
    align-items: center;
    gap: 5px;
    margin-left: 4px;
}

.infocenter .caret {
    margin-right: 4px;
}

.divider {
    width: 1px;
    height: 20px;
    margin: 0 8px;
    background: #888;
}

.window-buttons {
    display: flex;
    width: 163px;
    padding-left: 25px;
}

.window-buttons button {
    width: 45px;
    display: flex;
    align-items: center;
    justify-content: center;
}

.app-button {
    position: absolute;
    left: 0;
    top: 0;
    width: 41px;
    height: 41px;
    border: 1px solid #1c1c1c;
    background: linear-gradient(#bbb, #707070);
}

/* Ribbon tabs */
.tabs {
    display: flex;
    align-items: stretch;
    height: 21px;
    flex: none;
    padding-left: 46px;
    background: #4e4e4e;
    border-top: 1px solid #333;
    border-bottom: 1px solid #383838;
    color: #c8c8c8;
    line-height: 20px;
}

.tabs a {
    padding: 0 10px;
}

.tabs a:nth-child(n+5) {
    padding: 0 10px 0 11px;
}

.tabs a.active {
    margin-top: 2px;
    padding: 0 9px;
    line-height: 16px;
    background: linear-gradient(#6d6d6d, #5b5b5b);
    border: 1px solid #3a3a3a;
    border-bottom: 0;
    color: #fff;
}

.ribbon-min {
    margin-left: 20px;
}

.ribbon-min svg {
    width: 24px;
    height: 8px;
}

/* Ribbon panels */
.ribbon {
    display: flex;
    gap: 2px;
    height: 101px;
    flex: none;
    padding: 0 2px 1px;
    background: #3e3e3e;
    border-bottom: 3px solid #606060;
}

.panel {
    display: flex;
    flex-direction: column;
    flex: none;
    background: linear-gradient(#5f5f5f, #565656);
}

.panel-body {
    display: flex;
    flex: 1;
    min-height: 0;
    padding-top: 4px;
}

.panel-title {
    position: relative;
    display: flex;
    align-items: center;
    justify-content: center;
    height: 19px;
    flex: none;
    background: #4a4a4a;
}

.launcher {
    position: absolute;
    right: 4px;
    width: 8px;
    height: 8px;
}

.draw { width: 223px; }
.modify { width: 131px; }
.annotation { width: 146px; }
.layers { width: 271px; }
.block { width: 78px; }
.props { width: 220px; }
.groups { width: 67px; }

.big {
    display: flex;
    flex-direction: column;
    align-items: center;
    flex: none;
    min-width: 42px;
    padding-top: 2px;
}

.big svg {
    width: 32px;
    height: 32px;
    margin-bottom: 5px;
}

.big .caret {
    margin-top: 2px;
}

.big.wide {
    display: block;
    width: 60px;
    text-align: center;
}

.big.wide svg {
    margin: 0 auto 5px;
}

.letter {
    height: 37px;
    font-size: 38px;
    line-height: 34px;
    color: #e0e0e0;
}

.draw .big:nth-child(2) {
    width: 44px;
}

.draw .big:nth-child(3) {
    width: 56px;
}

.draw .big:nth-child(4) {
    min-width: 36px;
}

.annotation .big:first-child {
    width: 46px;
}

.annotation .big:nth-child(2) {
    width: 58px;
}

.tools {
    display: grid;
    grid-auto-rows: 24px;
    align-items: center;
    justify-items: center;
    align-content: start;
}

.with-caret {
    grid-template-columns: 24px 10px;
}

.draw .tools {
    margin-left: auto;
    margin-right: 8px;
}

.annotation .tools {
    margin-left: auto;
    margin-right: 4px;
}

.with-caret.tight {
    grid-template-columns: 20px 16px;
}

.block .big {
    min-width: 40px;
}

.modify-grid {
    grid-template-columns: 28px 28px 30px 10px 32px;
}

.layer-tools {
    flex: 1;
    min-width: 0;
    padding-right: 1px;
}

.layer-grid {
    grid-template-columns: repeat(5, 24px);
}

.group-tools {
    margin-left: auto;
    margin-right: 2px;
}

.ic.on {
    height: 22px;
    background: #5d82c0;
    border: 1px solid #2b4775;
}

/* Drop-downs */
.combo {
    position: relative;
    display: flex;
    align-items: center;
    height: 22px;
    background: linear-gradient(#535353, #646464);
    border: 1px solid #373737;
}

.combo::after {
    content: "";
    position: absolute;
    right: 2px;
    top: 8px;
    border: 4px solid transparent;
    border-top: 5px solid #fff;
    border-bottom: 0;
    pointer-events: none;
}

.combo select {
    appearance: none;
    flex: 1;
    min-width: 0;
    height: 20px;
    margin-right: 20px;
    overflow: hidden;
}

.combo.line-combo select {
    margin-right: 14px;
}

.combo option {
    background: #555;
}

.layer-combo {
    margin: 1px 0;
}

.combo-icons {
    display: flex;
    align-items: center;
    gap: 4px;
    padding: 0 4px 0 3px;
}

.swatch {
    width: 16px;
    height: 16px;
    flex: none;
}

.swatch.white {
    width: 14px;
    height: 14px;
    background: #fff;
    border: 1px solid #000;
}

.swatch.orange {
    background: #a55200;
    border: 1px solid #ccc;
    margin: 0 10px 0 12px;
}

.prop-rows {
    display: grid;
    grid-template-columns: 20px 136px;
    grid-auto-rows: 22px;
    row-gap: 2px;
    align-items: center;
    align-content: start;
    padding-top: 1px;
    margin-left: 2px;
}

.sample {
    width: 58px;
    height: 1px;
    flex: none;
    margin: 0 3px 0 8px;
    background: #fff;
}

.folded {
    display: flex;
    flex-direction: column;
    align-items: center;
    width: 59px;
    flex: none;
    padding-top: 4px;
    background: linear-gradient(#666, #4b4b4b);
}

.folded svg {
    width: 32px;
    height: 32px;
    margin-bottom: 4px;
}

.folded .caret {
    margin: auto 0 5px;
}

/* Work area */
.workspace {
    display: grid;
    grid-template-columns: 535px 1fr;
    flex: 1;
    min-height: 0;
}

.palette {
    display: flex;
    flex-direction: column;
    min-height: 0;
    padding: 2px 0 15px;
    background: #5b5b5b;
}

.palette-title {
    display: flex;
    align-items: center;
    gap: 5px;
    height: 20px;
    flex: none;
    padding-left: 6px;
    margin-right: 2px;
    background: #4d4d4d;
    border-radius: 6px 6px 0 0;
}

.grip {
    width: 4px;
    height: 10px;
    background: repeating-linear-gradient(#333 0 1px, transparent 1px 2px);
}

.palette-body {
    display: flex;
    flex-direction: column;
    flex: 1;
    min-height: 0;
    padding: 11px 13px 0 17px;
}

.object-row {
    display: flex;
    align-items: center;
    margin: 0 -6px 3px 0;
}

.object-combo {
    flex: 1;
    height: 24px;
    padding-left: 3px;
    margin-right: 5px;
    background: linear-gradient(#787878, #606060);
}

.object-combo::after {
    right: 4px;
    top: 10px;
    border-width: 3px 3px 0;
}

.object-combo select {
    height: 22px;
    margin-right: 13px;
    border-right: 1px solid #3b3b3b;
}

.prop-scroll {
    flex: 1;
    min-height: 0;
    overflow: hidden;
}

/* scroll thumb left of the property list */
.palette-body::before {
    content: "";
    position: absolute;
    left: 3px;
    top: 207px;
    width: 5px;
    height: 348px;
    border-radius: 3px;
    background: #444;
}

.section {
    display: flex;
    align-items: center;
    justify-content: space-between;
    height: 20px;
    margin: 0;
    padding: 0 7px 0 6px;
    background: #484848;
    border: 1px solid #303030;
    font-size: 11px;
}

.section button {
    width: 6px;
    height: 2px;
    background: #fff;
}

.proptable {
    width: calc(100% - 17px);
    margin: 0 0 2px 17px;
    border-collapse: collapse;
    table-layout: fixed;
}

.proptable th, .proptable td {
    height: 19px;
    padding: 0 2px 1px;
    border: 1px solid #505050;
    text-align: left;
    font-weight: normal;
    line-height: 15px;
    white-space: nowrap;
}

.proptable th {
    width: 228px;
    padding-left: 6px;
}

.muted {
    color: #a5a5a5;
}

.color-box {
    display: inline-block;
    width: 10px;
    height: 10px;
    margin: 0 6px 0 1px;
    background: #a55200;
    border: 1px solid #111;
    vertical-align: -1px;
}

.line-sample {
    display: inline-block;
    width: 62px;
    height: 1px;
    margin: 0 5px 0 3px;
    background: #fff;
    vertical-align: 4px;
}

.editor {
    display: flex;
    flex-direction: column;
    min-width: 0;
    min-height: 0;
}

.canvas {
    position: relative;
    flex: 1;
    min-height: 0;
    overflow: hidden;
    background: #212830;
}

.drawing {
    width: 100%;
    height: 100%;
}

.frame {
    fill: none;
    stroke: #ab5800;
}

.note {
    fill: #a65808;
    font-family: "Liberation Sans", sans-serif;
    font-size: 36px;
}

.picked {
    fill: #8d6a69;
    stroke: #263e70;
    stroke-width: 2px;
    paint-order: stroke;
}

.picked .small {
    font-size: 29px;
    fill: #8f6145;
}

.cursor {
    fill: none;
    stroke: #f0f0f0;
}

.viewport-label {
    position: absolute;
    left: 3px;
    top: 6px;
}

.doc-buttons {
    position: absolute;
    right: 10px;
    top: 9px;
    display: flex;
    gap: 8px;
}

.viewcube {
    position: absolute;
    right: 11px;
    top: 34px;
    width: 84px;
    height: 84px;
    color: #aeb1b5;
    font-family: "Liberation Sans", sans-serif;
    font-size: 13px;
    font-weight: bold;
}

.viewcube svg {
    width: 84px;
    height: 84px;
}

.viewcube span {
    position: absolute;
    width: 100%;
    text-align: center;
    left: 0;
}

.viewcube .north { top: 0; }
.viewcube .south { bottom: 0; }
.viewcube .east { top: 35px; left: 35px; }
.viewcube .west { top: 35px; left: -35px; }
.viewcube .top { top: 35px; font-size: 8px; color: #4d5257; }

.wcs {
    position: absolute;
    right: 30px;
    top: 131px;
    display: flex;
    align-items: center;
    gap: 6px;
    height: 17px;
    padding: 0 4px;
    background: #8a8d94;
    border: 1px solid #a3a6ab;
    border-radius: 4px;
    color: #3f434a;
}

.wcs svg {
    width: 10px;
    height: 6px;
}

/* Command window */
.command {
    display: flex;
    height: 92px;
    flex: none;
    border: solid #5a5a5a;
    border-width: 4px 1px 1px;
    font-family: "DejaVu Sans Mono", monospace;
    color: #111;
}

.command-side {
    display: flex;
    flex-direction: column;
    align-items: center;
    gap: 6px;
    width: 22px;
    padding-top: 5px;
    background: linear-gradient(#7d7d7d, #444);
}

.dots {
    width: 17px;
    height: 6px;
    background: repeating-linear-gradient(90deg, #bbb 0 2px, transparent 2px 3px);
}

.command-main {
    display: flex;
    flex-direction: column;
    flex: 1;
}

.history {
    flex: 1;
    padding: 3px 2px;
    background: #c8c8c8;
    font-size: 12px;
}

.prompt {
    display: flex;
    align-items: center;
    gap: 3px;
    height: 23px;
    padding-left: 5px;
    background: #fff;
    border-top: 1px solid #777;
}

.prompt input {
    flex: 1;
    padding-left: 4px;
    font-size: 12px;
    font-style: italic;
}

.prompt input::placeholder {
    color: #8c8c8c;
}

/* Layout tabs and status bar */
.bottom {
    display: flex;
    justify-content: space-between;
    align-items: flex-start;
    height: 48px;
    flex: none;
    background: #383838;
    border-top: 1px solid #555;
}

.layouts {
    display: flex;
    gap: 2px;
    padding-left: 12px;
    color: #bbb;
}

.layouts button {
    height: 17px;
    padding: 0 11px;
    background: #555;
    border-radius: 2px 2px 10px 10px;
}

.layouts .active {
    background: linear-gradient(#5a5a5a, #8a8a8a);
    color: #fff;
    font-weight: bold;
}

.layouts .add {
    width: 24px;
    padding: 0 7px;
    margin-left: 2px;
}

.layouts .add svg {
    width: 10px;
    height: 10px;
}

.status {
    display: flex;
    height: 27px;
    margin-top: 20px;
    border: 1px solid #777;
    background: #434343;
}

.cell {
    display: flex;
    align-items: center;
    border-right: 1px solid #777;
}

.cell .caret {
    margin: 0 5px 0 3px;
}

.cell.roomy {
    padding: 0 2px;
}

.cell.last {
    border-right: 0;
}

.model {
    padding: 0 3px;
    color: #fff;
    font-size: 12px;
}

.scale {
    padding: 0 1px;
}

/* Windows taskbar */
.taskbar {
    display: flex;
    height: 40px;
    flex: none;
    background: linear-gradient(100deg, #1c130e, #2a1c14 25%, #1d130f 48%, #0a0607 60%, #150a0a 80%, #1b1210 92%, #0c0909);
    color: #fff;
}

.task {
    position: relative;
    display: flex;
    align-items: center;
    justify-content: center;
    width: 49px;
    flex: none;
}

.task svg {
    width: 22px;
    height: 22px;
}

.task.running::after, .task.current::after {
    content: "";
    position: absolute;
    left: 4px;
    right: 4px;
    bottom: 0;
    height: 2px;
    background: #76b9ed;
}

.task.current {
    background: #4c4240;
}

.task.current svg {
    width: 24px;
    height: 24px;
}

.task.current::after {
    left: 0;
    right: 0;
}

.task.office b {
    position: absolute;
    left: 14px;
    width: 13px;
    text-align: center;
}

.tray {
    display: flex;
    align-items: center;
    gap: 8px;
    margin-left: auto;
    padding-right: 25px;
}

.lang {
    margin: 0 6px 0 2px;
}

.clock {
    display: flex;
    flex-direction: column;
    align-items: center;
    line-height: 17px;
    margin-right: 8px;
}

/* Callouts drawn over the whole window */
.callouts {
    position: absolute;
    left: 0;
    top: 0;
    width: 100%;
    height: 100%;
    pointer-events: none;
}

.callouts text {
    fill: #c94f5d;
    font-family: "Open Sans", sans-serif;
    font-size: 20px;
}
```
